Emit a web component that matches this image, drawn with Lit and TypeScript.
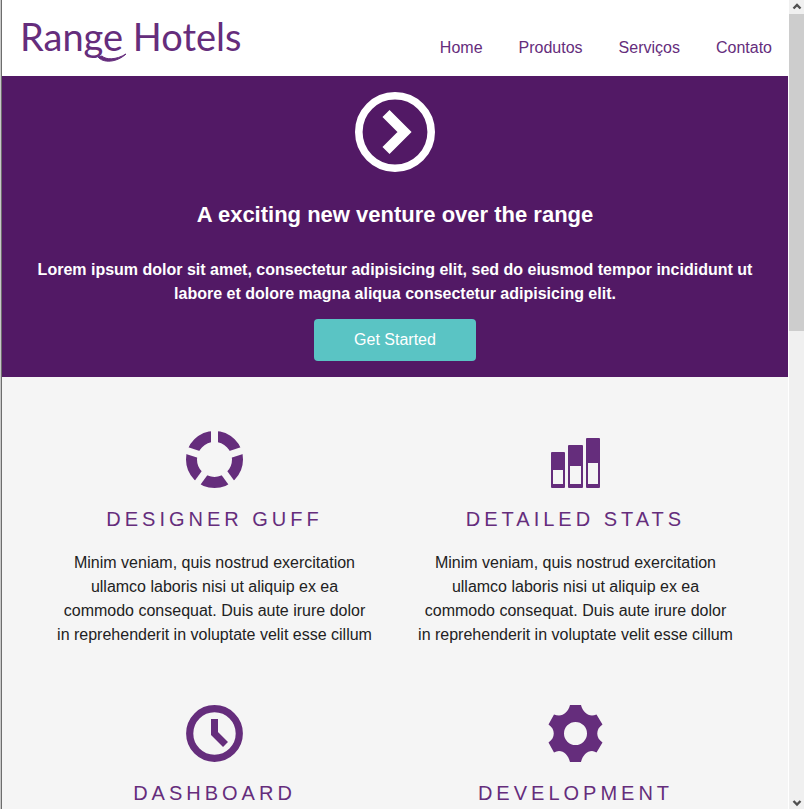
import { LitElement, html, css, svg } from "lit";
import { customElement, property } from "lit/decorators.js";

const icons = {
  ring: svg`<circle cx="28.5" cy="28.5" r="23" fill="none" stroke="currentColor" stroke-width="11"/>
    <g stroke="#f5f5f5" stroke-width="7">
      <path d="M28.5 28.5V-4"/>
      <path d="M28.5 28.5V-4" transform="rotate(72 28.5 28.5)"/>
      <path d="M28.5 28.5V-4" transform="rotate(144 28.5 28.5)"/>
      <path d="M28.5 28.5V-4" transform="rotate(216 28.5 28.5)"/>
      <path d="M28.5 28.5V-4" transform="rotate(288 28.5 28.5)"/>
    </g>`,
  bars: svg`<g fill="currentColor">
      <rect x="4" y="21" width="14" height="36" rx="1"/>
      <rect x="21" y="14" width="15" height="43" rx="1"/>
      <rect x="39" y="7" width="14" height="50" rx="1"/>
    </g>
    <g fill="#f5f5f5">
      <rect x="6" y="39" width="10" height="14"/>
      <rect x="23" y="35" width="11" height="18"/>
      <rect x="41" y="32" width="10" height="21"/>
    </g>`,
  clock: svg`<circle cx="28.5" cy="28.5" r="24.8" fill="none" stroke="currentColor" stroke-width="7.2"/>
    <path d="M28.5 14V28.5L39.5 39.5" fill="none" stroke="currentColor" stroke-width="7"/>`,
  gear: svg`<path fill="currentColor" fill-rule="evenodd" d="M23 0H34C35.5 6 40 10.500 45 10.500Q47 10.500 49.500 9.500L55.500 19.500C48.500 24 48.500 33 55.500 37.500L49.500 47.500Q47 46 45 46C40 46 35.500 50.500 34 57H23C21.500 50.500 17 46 12 46Q9.500 46 7 47.500L1.500 37.500C8.500 33 8.500 24 1.500 19.500L7 9.500Q9.500 10.500 12 10.500C17 10.500 21.500 6 23 0ZM28.500 17A11.500 11.500 0 1 0 28.500 40A11.500 11.500 0 1 0 28.500 17Z"/>`,
};

type IconName = keyof typeof icons;

@customElement("feature-card")
export class FeatureCard extends LitElement {
  @property() icon: IconName = "ring";
  @property() heading = "";
  @property() text = "";

  static styles = css`
    :host {
      display: block;
      padding: 0 22px;
      text-align: center;
    }
    .icon {
      display: block;
      width: 57px;
      height: 57px;
      margin: 0 auto 15px;
      color: #652d7c;
      overflow: hidden;
    }
    .heading {
      margin: 0 0 16px;
      font-size: 20px;
      line-height: 32px;
      font-weight: 400;
      letter-spacing: 4px;
      text-transform: uppercase;
      color: #652d7c;
    }
    .text {
      margin: 0;
      font-size: 16px;
      line-height: 24px;
      color: #222;
    }
  `;

  render() {
    return html`
      <svg class="icon" viewBox="0 0 57 57" aria-hidden="true">${icons[this.icon]}</svg>
      <h3 class="heading">${this.heading}</h3>
      ${this.text ? html`<p class="text">${this.text}</p>` : null}
    `;
  }
}

@customElement("app-root")
export class AppRoot extends LitElement {
  static styles = css`
    :host {
      display: grid;
      grid-template-columns: minmax(0, 1fr) 15px;
      height: 100vh;
      overflow: hidden;
      background: #fff;
      font-family: "Liberation Sans", Arial, sans-serif;
      font-size: 16px;
      line-height: 24px;
    }
    .window {
      display: grid;
      min-height: 0;
      border-left: 1px solid #c8c8c8;
    }
    .page {
      min-height: 0;
      overflow: hidden;
      margin-right: 1px;
      border-left: 1px solid #6d6d6d;
      background: #f5f5f5;
    }
    .header {
      display: flex;
      justify-content: space-between;
      align-items: flex-start;
      height: 76px;
      padding: 0 16px 0 18px;
      background: #fff;
    }
    .logo {
      position: relative;
      padding-top: 8px;
      font-family: Lato, "Open Sans", sans-serif;
      font-size: 38px;
      line-height: 56px;
      white-space: nowrap;
      color: #652d7c;
      text-decoration: none;
    }
    .swash {
      position: absolute;
      left: 76px;
      top: 48px;
      width: 32px;
      height: 16px;
    }
    .nav {
      display: flex;
      gap: 36px;
      padding-top: 36px;
    }
    .link {
      color: #652d7c;
      text-decoration: none;
    }
    .hero {
      display: flex;
      flex-direction: column;
      align-items: center;
      padding: 16px 32px;
      background: #521965;
      color: #fff;
      text-align: center;
    }
    .mark {
      width: 80px;
      height: 80px;
    }
    .title {
      margin: 27px 0;
      font-size: 22px;
      line-height: 32px;
    }
    .lead {
      margin: 0 0 13px;
      font-weight: 700;
    }
    .button {
      height: 42px;
      padding: 0 40px;
      border: 0;
      border-radius: 4px;
      background: #5ac4c4;
      color: #fff;
      font: inherit;
    }
    .features {
      display: grid;
      grid-template-columns: 1fr 1fr;
      row-gap: 58px;
      padding: 54px 32px 0;
    }
    .scrollbar {
      display: flex;
      flex-direction: column;
      background: #f0f0f0;
    }
    .arrow {
      flex: none;
      width: 15px;
      height: 14px;
    }
    .thumb {
      flex: 13;
      background: #cdcdcd;
    }
    .track {
      flex: 19;
    }
  `;

  render() {
    const text =
      "Minim veniam, quis nostrud exercitation ullamco laboris nisi ut aliquip ex ea commodo consequat. Duis aute irure dolor in reprehenderit in voluptate velit esse cillum";
    return html`
      <div class="window">
        <div class="page">
          <header class="header">
            <a class="logo" href="#"
              >Range Hotels<svg class="swash" viewBox="0 0 32 16" aria-hidden="true">
                <path
                  d="M2 9C7 15 20 15 30 6C20 12 10 12 6 8Z"
                  fill="currentColor"
                  stroke="currentColor"
                  stroke-linejoin="round"
                /></svg
            ></a>
            <nav class="nav">
              ${["Home", "Produtos", "Serviços", "Contato"].map(
                (label) => html`<a class="link" href="#">${label}</a>`
              )}
            </nav>
          </header>
          <section class="hero">
            <svg class="mark" viewBox="0 0 80 80" aria-hidden="true">
              <circle cx="40" cy="40" r="36.2" fill="none" stroke="#fff" stroke-width="7.6" />
              <path d="M31 21.5L49.5 40L31 58.5" fill="none" stroke="#fff" stroke-width="10" />
            </svg>
            <h2 class="title">A exciting new venture over the range</h2>
            <p class="lead">
              Lorem ipsum dolor sit amet, consectetur adipisicing elit, sed do eiusmod tempor
              incididunt ut labore et dolore magna aliqua consectetur adipisicing elit.
            </p>
            <button class="button" type="button">Get Started</button>
          </section>
          <main class="features">
            <feature-card icon="ring" heading="Designer Guff" .text=${text}></feature-card>
            <feature-card icon="bars" heading="Detailed Stats" .text=${text}></feature-card>
            <feature-card icon="clock" heading="Dashboard"></feature-card>
            <feature-card icon="gear" heading="Development"></feature-card>
          </main>
        </div>
      </div>
      <div class="scrollbar" aria-hidden="true">
        <svg class="arrow" viewBox="0 0 15 14">
          <path d="M4.5 8.5L8 5L11.5 8.5" fill="none" stroke="#505050" stroke-width="2.4" />
        </svg>
        <div class="thumb"></div>
        <div class="track"></div>
        <svg class="arrow" viewBox="0 0 15 14">
          <path d="M4.5 6L8 9.500L11.5 6" fill="none" stroke="#505050" stroke-width="2.4" />
        </svg>
      </div>
    `;
  }
}
